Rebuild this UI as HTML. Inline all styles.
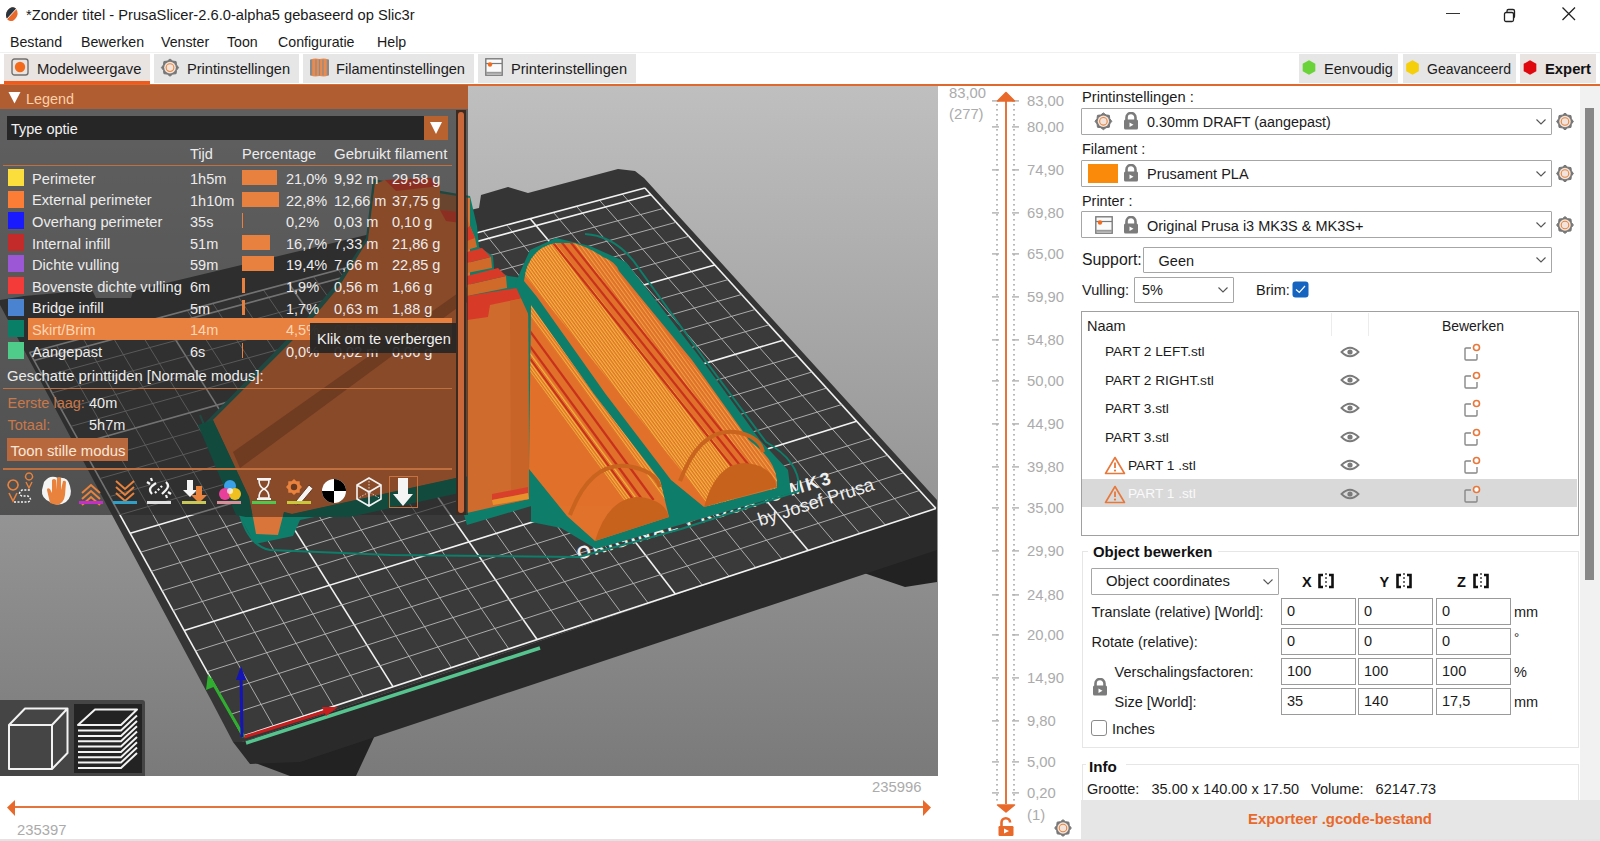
<!DOCTYPE html><html><head><meta charset="utf-8"><style>
html,body{margin:0;padding:0;width:1600px;height:841px;overflow:hidden;background:#fff}
body{position:relative;font-family:"Liberation Sans",sans-serif}
.t{position:absolute;white-space:nowrap;line-height:1;font-family:"Liberation Sans",sans-serif}
</style></head><body>
<div style="position:absolute;left:0px;top:0px;width:1600px;height:54px;background:#fff"></div>
<svg style="position:absolute;left:0;top:0" width="26" height="28" viewBox="0 0 26 28">
<clipPath id="tc"><ellipse cx="11.8" cy="14.2" rx="5.6" ry="7" transform="rotate(20 11.8 14.2)"/></clipPath>
<g clip-path="url(#tc)"><rect x="0" y="0" width="26" height="28" fill="#ea6a2c"/><polygon points="0,0 26,0 18.5,6.5 6,20 0,22" fill="#263540"/><path d="M18.5 6.5 L6 20" stroke="#fff" stroke-width="0.9"/></g></svg>
<div class="t" style="left:26.0px;top:7.6px;font-size:14.7px;color:#1a1a1a;font-weight:normal;">*Zonder titel - PrusaSlicer-2.6.0-alpha5 gebaseerd op Slic3r</div>
<div style="position:absolute;left:1446px;top:13px;width:14px;height:1px;background:#333"></div>
<svg style="position:absolute;left:1500px;top:6px" width="18" height="18" viewBox="0 0 18 18"><rect x="4.5" y="6.5" width="9" height="9" rx="1.5" fill="none" stroke="#222" stroke-width="1.3"/><path d="M7 6.5 V5 a1.5 1.5 0 0 1 1.5 -1.5 H13 a1.5 1.5 0 0 1 1.5 1.5 V10.5 a1.5 1.5 0 0 1 -1.5 1.5 H13.5" fill="none" stroke="#222" stroke-width="1.3"/></svg>
<svg style="position:absolute;left:1561px;top:6px" width="16" height="16" viewBox="0 0 16 16"><path d="M1.5 1.5 L14 14 M14 1.5 L1.5 14" stroke="#222" stroke-width="1.3"/></svg>
<div class="t" style="left:10.0px;top:34.8px;font-size:14.2px;color:#1a1a1a;font-weight:normal;">Bestand</div>
<div class="t" style="left:81.0px;top:34.8px;font-size:14.2px;color:#1a1a1a;font-weight:normal;">Bewerken</div>
<div class="t" style="left:161.0px;top:34.8px;font-size:14.2px;color:#1a1a1a;font-weight:normal;">Venster</div>
<div class="t" style="left:227.0px;top:34.8px;font-size:14.2px;color:#1a1a1a;font-weight:normal;">Toon</div>
<div class="t" style="left:278.0px;top:34.8px;font-size:14.2px;color:#1a1a1a;font-weight:normal;">Configuratie</div>
<div class="t" style="left:377.0px;top:34.8px;font-size:14.2px;color:#1a1a1a;font-weight:normal;">Help</div>
<div style="position:absolute;left:0px;top:52px;width:1600px;height:1px;background:#f0f0f0"></div>
<div style="position:absolute;left:4px;top:54px;width:146px;height:29px;background:#e9e4e2"></div>
<div style="position:absolute;left:154px;top:54px;width:145px;height:29px;background:#e6e6e6"></div>
<div style="position:absolute;left:303px;top:54px;width:171px;height:29px;background:#e6e6e6"></div>
<div style="position:absolute;left:478px;top:54px;width:158px;height:29px;background:#e6e6e6"></div>
<div style="position:absolute;left:1299px;top:54px;width:99px;height:29px;background:#e6e6e6"></div>
<div style="position:absolute;left:1403px;top:54px;width:113px;height:29px;background:#e6e6e6"></div>
<div style="position:absolute;left:1520px;top:54px;width:76px;height:29px;background:#e9e3e2"></div>
<div style="position:absolute;left:4px;top:81px;width:146px;height:4px;background:#f05a1a"></div>
<div style="position:absolute;left:0px;top:84px;width:1600px;height:2px;background:#e0692e"></div>
<svg style="position:absolute;left:11px;top:58px" width="18" height="18" viewBox="0 0 18 18"><rect x="1" y="1" width="16" height="16" rx="2.5" fill="none" stroke="#707070" stroke-width="1.4"/><circle cx="9" cy="9" r="5.2" fill="#f26b1d"/></svg>
<svg style="position:absolute;left:0;top:0;overflow:visible" width="1" height="1"><polygon points="178.60,67.60 176.52,70.30 176.08,73.68 172.70,74.12 170.00,76.20 167.30,74.12 163.92,73.68 163.48,70.30 161.40,67.60 163.48,64.90 163.92,61.52 167.30,61.08 170.00,59.00 172.70,61.08 176.08,61.52 176.52,64.90" fill="#777" stroke="#777" stroke-width="1" stroke-linejoin="round"/><circle cx="170" cy="67.6" r="5.85" fill="#f2e4dc"/><circle cx="170" cy="67.6" r="3.87" fill="none" stroke="#e8873e" stroke-width="1.1"/></svg>
<svg style="position:absolute;left:310px;top:58px" width="19" height="19" viewBox="0 0 19 19"><path d="M1 1.5 Q4 0 9.5 1 Q15 0 18 1.5 V17.5 Q15 19 9.5 18 Q4 19 1 17.5 Z" fill="#e98a4e"/><path d="M1 1.5 V17.5 M18 1.5 V17.5" stroke="#8a8a8a" stroke-width="2.4"/><path d="M6 1.5 V17.5 M9.5 1.5 V17.5 M13 1.5 V17.5" stroke="#8a8a8a" stroke-width="1.2"/></svg>
<svg style="position:absolute;left:485px;top:58px" width="18" height="18" viewBox="0 0 18 18"><rect x="0.8" y="0.8" width="16.4" height="16.4" fill="#fafafa" stroke="#7a7a7a" stroke-width="1.4"/><path d="M1 5.5 H17" stroke="#7a7a7a" stroke-width="1.2"/><path d="M1 14.8 H17" stroke="#9a9a9a" stroke-width="2"/><circle cx="5" cy="6.5" r="2.2" fill="#f26b1d"/></svg>
<div class="t" style="left:37.0px;top:61.5px;font-size:14.8px;color:#1b1b1b;font-weight:normal;">Modelweergave</div>
<div class="t" style="left:187.0px;top:61.6px;font-size:14.6px;color:#1b1b1b;font-weight:normal;">Printinstellingen</div>
<div class="t" style="left:336.0px;top:61.6px;font-size:14.6px;color:#1b1b1b;font-weight:normal;">Filamentinstellingen</div>
<div class="t" style="left:511.0px;top:61.6px;font-size:14.6px;color:#1b1b1b;font-weight:normal;">Printerinstellingen</div>
<svg style="position:absolute;left:0;top:0;overflow:visible" width="1" height="1"><polygon points="1315.32,71.15 1309.00,74.80 1302.68,71.15 1302.68,63.85 1309.00,60.20 1315.32,63.85" fill="#6ad33a"/><polygon points="1418.82,71.15 1412.50,74.80 1406.18,71.15 1406.18,63.85 1412.50,60.20 1418.82,63.85" fill="#f5cf0a"/><polygon points="1536.32,71.15 1530.00,74.80 1523.68,71.15 1523.68,63.85 1530.00,60.20 1536.32,63.85" fill="#e0080f"/></svg>
<div class="t" style="left:1324.0px;top:61.6px;font-size:14.6px;color:#1b1b1b;font-weight:normal;">Eenvoudig</div>
<div class="t" style="left:1427.0px;top:62.1px;font-size:14.0px;color:#1b1b1b;font-weight:normal;">Geavanceerd</div>
<div class="t" style="left:1545.0px;top:61.5px;font-size:14.8px;color:#111;font-weight:bold;">Expert</div>
<svg style="position:absolute;left:0;top:86px" width="938" height="690" viewBox="0 86 938 690">
<defs><linearGradient id="bg" x1="0" y1="0" x2="0" y2="1"><stop offset="0" stop-color="#bfbfbf"/><stop offset="1" stop-color="#7a7a7a"/></linearGradient><pattern id="ys" patternUnits="userSpaceOnUse" width="2.6" height="10" patternTransform="rotate(-36.2)"><rect x="0" y="0" width="1.2" height="10" fill="#f6c040"/></pattern><pattern id="ys2" patternUnits="userSpaceOnUse" width="3.2" height="10" patternTransform="rotate(-36.2)"><rect x="0" y="0" width="1" height="10" fill="#f2b048"/></pattern></defs>
<rect x="0" y="86" width="938" height="690" fill="url(#bg)"/>
<polygon points="247.0,760.0 376.0,733.0 356.0,776.0 290.0,776.0" fill="#222"/>
<polygon points="840.0,560.0 937.0,545.0 937.0,582.0 905.0,587.0 861.0,572.0" fill="#222"/>
<polygon points="233.0,742.0 242.0,742.0 937.0,506.0 937.0,550.0 300.0,762.0 250.0,764.0" fill="#2a2a2a"/>
<polygon points="242.0,742.0 937.0,506.0 937.0,500.0 644.0,178.0 635.0,171.0 618.0,169.0 528.0,193.0 508.0,187.0 481.0,195.0 479.0,208.0 466.0,211.0 133.0,291.0 131.0,298.0 96.0,298.0 92.0,290.0 24.0,296.0 0.0,300.0 0.0,305.0 104.0,500.0 211.0,700.0 233.0,742.0" fill="#353535"/>
<polygon points="242.9,736.1 935.9,508.5 644.9,188.0 29.6,352.4" fill="#3a3a3a"/>
<line x1="242.9" y1="736.1" x2="29.6" y2="352.4" stroke="#f2f2f2" stroke-width="1.6"/><line x1="273.4" y1="726.1" x2="56.4" y2="345.2" stroke="#b8b8b8" stroke-width="0.9"/><line x1="303.7" y1="716.2" x2="82.9" y2="338.1" stroke="#b8b8b8" stroke-width="0.9"/><line x1="333.7" y1="706.3" x2="109.3" y2="331.1" stroke="#b8b8b8" stroke-width="0.9"/><line x1="363.5" y1="696.5" x2="135.4" y2="324.1" stroke="#b8b8b8" stroke-width="0.9"/><line x1="393.1" y1="686.8" x2="161.4" y2="317.1" stroke="#f2f2f2" stroke-width="1.6"/><line x1="422.3" y1="677.2" x2="187.2" y2="310.3" stroke="#b8b8b8" stroke-width="0.9"/><line x1="451.4" y1="667.6" x2="212.8" y2="303.4" stroke="#b8b8b8" stroke-width="0.9"/><line x1="480.2" y1="658.2" x2="238.3" y2="296.6" stroke="#b8b8b8" stroke-width="0.9"/><line x1="508.8" y1="648.8" x2="263.5" y2="289.9" stroke="#b8b8b8" stroke-width="0.9"/><line x1="537.1" y1="639.5" x2="288.6" y2="283.2" stroke="#f2f2f2" stroke-width="1.6"/><line x1="565.2" y1="630.3" x2="313.5" y2="276.5" stroke="#b8b8b8" stroke-width="0.9"/><line x1="593.1" y1="621.1" x2="338.3" y2="269.9" stroke="#b8b8b8" stroke-width="0.9"/><line x1="620.7" y1="612.0" x2="362.8" y2="263.3" stroke="#b8b8b8" stroke-width="0.9"/><line x1="648.1" y1="603.0" x2="387.2" y2="256.8" stroke="#b8b8b8" stroke-width="0.9"/><line x1="675.3" y1="594.1" x2="411.5" y2="250.3" stroke="#f2f2f2" stroke-width="1.6"/><line x1="702.3" y1="585.2" x2="435.5" y2="243.9" stroke="#b8b8b8" stroke-width="0.9"/><line x1="729.1" y1="576.4" x2="459.4" y2="237.5" stroke="#b8b8b8" stroke-width="0.9"/><line x1="755.7" y1="567.7" x2="483.2" y2="231.2" stroke="#b8b8b8" stroke-width="0.9"/><line x1="782.0" y1="559.0" x2="506.7" y2="224.9" stroke="#b8b8b8" stroke-width="0.9"/><line x1="808.2" y1="550.5" x2="530.1" y2="218.6" stroke="#f2f2f2" stroke-width="1.6"/><line x1="834.1" y1="541.9" x2="553.4" y2="212.4" stroke="#b8b8b8" stroke-width="0.9"/><line x1="859.8" y1="533.5" x2="576.5" y2="206.3" stroke="#b8b8b8" stroke-width="0.9"/><line x1="885.4" y1="525.1" x2="599.4" y2="200.1" stroke="#b8b8b8" stroke-width="0.9"/><line x1="910.7" y1="516.8" x2="622.2" y2="194.0" stroke="#b8b8b8" stroke-width="0.9"/><line x1="935.9" y1="508.5" x2="644.9" y2="188.0" stroke="#f2f2f2" stroke-width="1.6"/><line x1="242.9" y1="736.1" x2="935.9" y2="508.5" stroke="#f2f2f2" stroke-width="1.6"/><line x1="230.7" y1="714.3" x2="919.5" y2="490.5" stroke="#b8b8b8" stroke-width="0.9"/><line x1="218.8" y1="692.8" x2="903.4" y2="472.8" stroke="#b8b8b8" stroke-width="0.9"/><line x1="207.1" y1="671.7" x2="887.6" y2="455.3" stroke="#b8b8b8" stroke-width="0.9"/><line x1="195.5" y1="651.0" x2="872.0" y2="438.2" stroke="#b8b8b8" stroke-width="0.9"/><line x1="184.2" y1="630.5" x2="856.6" y2="421.2" stroke="#f2f2f2" stroke-width="1.6"/><line x1="173.0" y1="610.5" x2="841.5" y2="404.6" stroke="#b8b8b8" stroke-width="0.9"/><line x1="162.1" y1="590.7" x2="826.6" y2="388.1" stroke="#b8b8b8" stroke-width="0.9"/><line x1="151.3" y1="571.3" x2="811.9" y2="372.0" stroke="#b8b8b8" stroke-width="0.9"/><line x1="140.6" y1="552.2" x2="797.4" y2="356.0" stroke="#b8b8b8" stroke-width="0.9"/><line x1="130.2" y1="533.3" x2="783.1" y2="340.3" stroke="#f2f2f2" stroke-width="1.6"/><line x1="119.9" y1="514.8" x2="769.1" y2="324.8" stroke="#b8b8b8" stroke-width="0.9"/><line x1="109.7" y1="496.6" x2="755.2" y2="309.5" stroke="#b8b8b8" stroke-width="0.9"/><line x1="99.8" y1="478.6" x2="741.5" y2="294.5" stroke="#b8b8b8" stroke-width="0.9"/><line x1="89.9" y1="460.9" x2="728.1" y2="279.6" stroke="#b8b8b8" stroke-width="0.9"/><line x1="80.3" y1="443.5" x2="714.8" y2="265.0" stroke="#f2f2f2" stroke-width="1.6"/><line x1="70.7" y1="426.4" x2="701.7" y2="250.5" stroke="#b8b8b8" stroke-width="0.9"/><line x1="61.4" y1="409.5" x2="688.7" y2="236.3" stroke="#b8b8b8" stroke-width="0.9"/><line x1="52.1" y1="392.9" x2="676.0" y2="222.3" stroke="#b8b8b8" stroke-width="0.9"/><line x1="43.0" y1="376.5" x2="663.4" y2="208.4" stroke="#b8b8b8" stroke-width="0.9"/><line x1="34.0" y1="360.4" x2="651.0" y2="194.8" stroke="#f2f2f2" stroke-width="1.6"/><line x1="29.6" y1="352.4" x2="644.9" y2="188.0" stroke="#f2f2f2" stroke-width="1.6"/>
<text x="0" y="0" transform="translate(579 560) rotate(-16.8)" font-family="Liberation Sans" font-weight="bold" font-size="18" fill="#f0f0f0" letter-spacing="2.3">ORIGINAL PRUSA i3 MK3</text>
<text x="0" y="0" transform="translate(760 526) rotate(-17.5)" font-family="Liberation Sans" font-weight="normal" font-size="18.3" fill="#f0f0f0">by Josef Prusa</text>
<path d="M200 415 L238 506 Q246 545 270 550 L390 555 L579 557 L681 529 L799 491 Q801 462 766 442 L705 360 L640 270 Q618 236 585 234" fill="none" stroke="#0e7d6a" stroke-width="2"/>
<path d="M246 743 L540 648" stroke="#56c48e" stroke-width="3.5"/>
<polygon points="204,424 236,510 255,544 293,536 300,520 456,488 467,525 545,502 536,300 523,278 508,276 494,269 493,256 479,247 477,226 470,196 373,179 366,238 336,284 300,326" fill="#0e7d6a"/>
<polygon points="213,420 249,497 252,512 256,534 278,535 284,512 292,514 456,478 470,476 470,198 375,183 368,240 339,287 303,330" fill="#d9743a"/>
<polygon points="233,452 240,470 470,300 470,285" fill="#a65526"/>
<polygon points="460,200 470,226 475,238 477,247 467,250 460,250" fill="#d06a2a"/>
<polygon points="467,228 470,226 475,238 467,241" fill="#d83a28"/>
<polygon points="467,263 491,257 492,268 467,273" fill="#d06a2a"/>
<polygon points="467,252 482,248 491,257 467,263" fill="#d83a28"/>
<polygon points="467,285 506,276 507,288 467,296" fill="#d06a2a"/>
<polygon points="467,276 498,268 506,276 467,285" fill="#d83a28"/>
<polygon points="467,305 528,297 529,499 467,513" fill="#cf6b2d"/>
<polygon points="467,296 517,288 528,297 490,305 488,317 467,320" fill="#d83a28"/>
<polygon points="510,301 528,297 529,499 511,503" fill="#c86428"/>
<polygon points="492,494 528,487 528,493 492,500" fill="#d8402c"/><polygon points="492,500 528,493 529,499 493,505" fill="#e8902c"/>
<path d="M515 285 L521 270 L530 250 L556 238 L590 246 L626 262 L702 360 L760 440 L788 470 L791 493 L683 524 L596 549 L561 528 L531 522 L531 320 Z" fill="#0e7d6a"/>
<clipPath id="cb"><path d="M531 305 L594 394 L660 480 L669 517 L595 541 L567 516 L529 469 Z"/></clipPath>
<clipPath id="ca"><path d="M524 281 Q528 248 556 243 L574 243 Q590 248 603 257 Q616 262 619 271 L692 360 L749 440 L763 452 Q775 465 777 480 L777 488 L704 507 L671 480 L605.6 394 L537 297 Z"/></clipPath>
<path d="M531 305 L594 394 L660 480 L669 517 L595 541 L567 516 L529 469 Z" fill="#e0722c"/>
<g clip-path="url(#cb)"><path d="M485.2 300 L631.6 500" stroke="url(#ys)" stroke-width="12" opacity="0.9"/><path d="M529.2 300 L675.6 500" stroke="url(#ys)" stroke-width="18" opacity="0.8"/><path d="M487.2 300 L633.6 500" stroke="#c8321c" stroke-width="2.2"/><path d="M496.2 300 L642.6 500" stroke="#c8321c" stroke-width="2.2"/><path d="M507.2 300 L653.6 500" stroke="#c8321c" stroke-width="2.2"/></g>
<path d="M524 281 Q528 248 556 243 L574 243 Q590 248 603 257 Q616 262 619 271 L692 360 L749 440 L763 452 Q775 465 777 480 L777 488 L704 507 L671 480 L605.6 394 L537 297 Z" fill="#e0722c"/>
<g clip-path="url(#ca)"><path d="M516.8 230 L732.8 500" stroke="url(#ys)" stroke-width="44" opacity="0.9"/><path d="M572.8 230 L788.8 500" stroke="url(#ys2)" stroke-width="18" opacity="0.8"/><path d="M546.8 235 L733.2 468" stroke="#c8321c" stroke-width="2.2"/><path d="M555.8 235 L742.2 468" stroke="#c8321c" stroke-width="2.2"/><path d="M564.8 235 L751.2 468" stroke="#c8321c" stroke-width="2.2"/></g>
<path d="M570 515 Q590 462 627 466 Q655 470 660 487" fill="none" stroke="#c8641e" stroke-width="4"/>
<path d="M595 541 Q608 497 640 497 Q665 500 669 517 Z" fill="#c7621d"/>
<path d="M680 481 Q700 428 735 432 Q760 436 763 452" fill="none" stroke="#c8641e" stroke-width="4"/>
<path d="M704 507 Q716 463 745 463 Q772 465 777 487 Z" fill="#c7621d"/>
<path d="M244 737 L333 709" stroke="#c81e1e" stroke-width="3"/><polygon points="338,707 322,707 326,716" fill="#c81e1e"/>
<path d="M244 737 L210 678" stroke="#2fae2f" stroke-width="3"/><polygon points="208,674 206,690 216,686" fill="#2fae2f"/>
<path d="M242 737 L241 672" stroke="#1515b5" stroke-width="3"/><polygon points="241,666 236,680 246,680" fill="#1515b5"/>
</svg>
<div style="position:absolute;left:0;top:86px;width:468px;height:429px;background:rgba(42,42,42,0.64)"></div>
<svg style="position:absolute;left:0;top:109px" width="456" height="408" viewBox="0 109 456 408"><polygon points="213,420 303,330 339,287 368,240 375,184 385,180 431,178 440,186 440,210 468,214 468,476 456,478 292,514 284,512 278,535 256,534 249,497" fill="#884a29"/><polygon points="198,425 213,420 249,497 256,534 278,535 284,512 292,514 456,478 468,476 468,491 300,528 236,515" fill="#134a3e"/><polygon points="385,180 431,178 440,186 396,191" fill="#8c2f22"/><polygon points="440,210 468,213 468,224 446,221" fill="#8c2f22"/><polygon points="233,452 240,468 468,300 468,286" fill="#703c21"/></svg>
<div style="position:absolute;left:0;top:85px;width:468px;height:24px;background:#b15d32"></div>
<svg style="position:absolute;left:0;top:0;overflow:visible" width="1" height="1"><polygon points="8.5,92 20.5,92 14.5,103.5" fill="#fff"/></svg>
<div class="t" style="left:26.0px;top:91.8px;font-size:14.4px;color:#fdd0a6;font-weight:normal;">Legend</div>
<div style="position:absolute;left:7px;top:116px;width:417px;height:24px;background:#262626"></div>
<div style="position:absolute;left:424px;top:116px;width:24px;height:24px;background:#b8622f"></div>
<svg style="position:absolute;left:0;top:0;overflow:visible" width="1" height="1"><polygon points="430,122 442,122 436,134" fill="#fff"/></svg>
<div class="t" style="left:11.0px;top:121.7px;font-size:14.5px;color:#f2f2f2;font-weight:normal;">Type optie</div>
<div class="t" style="left:190.0px;top:146.7px;font-size:14.5px;color:#ececec;font-weight:normal;">Tijd</div>
<div class="t" style="left:242.0px;top:146.7px;font-size:14.5px;color:#ececec;font-weight:normal;">Percentage</div>
<div class="t" style="left:334.0px;top:146.3px;font-size:15.0px;color:#ececec;font-weight:normal;">Gebruikt filament</div>
<div style="position:absolute;left:3px;top:164.6px;width:449px;height:1.2px;background:#c0703e"></div>
<div style="position:absolute;left:8px;top:169.0px;width:16px;height:17px;background:#fbdd3b"></div>
<div class="t" style="left:32.0px;top:171.8px;font-size:14.66px;color:#ececec;font-weight:normal;">Perimeter</div>
<div class="t" style="left:190.0px;top:171.9px;font-size:14.5px;color:#ececec;font-weight:normal;">1h5m</div>
<div style="position:absolute;left:242px;top:170.0px;width:35px;height:15px;background:#e8803f"></div>
<div class="t" style="left:286.0px;top:171.9px;font-size:14.5px;color:#ececec;font-weight:normal;">21,0%</div>
<div class="t" style="left:334.0px;top:171.9px;font-size:14.5px;color:#ececec;font-weight:normal;">9,92 m</div>
<div class="t" style="left:392.0px;top:171.9px;font-size:14.5px;color:#ececec;font-weight:normal;">29,58 g</div>
<div style="position:absolute;left:8px;top:190.6px;width:16px;height:17px;background:#fc7d36"></div>
<div class="t" style="left:32.0px;top:193.4px;font-size:14.66px;color:#ececec;font-weight:normal;">External perimeter</div>
<div class="t" style="left:190.0px;top:193.5px;font-size:14.5px;color:#ececec;font-weight:normal;">1h10m</div>
<div style="position:absolute;left:242px;top:191.6px;width:37px;height:15px;background:#e8803f"></div>
<div class="t" style="left:286.0px;top:193.5px;font-size:14.5px;color:#ececec;font-weight:normal;">22,8%</div>
<div class="t" style="left:334.0px;top:193.5px;font-size:14.5px;color:#ececec;font-weight:normal;">12,66 m</div>
<div class="t" style="left:392.0px;top:193.5px;font-size:14.5px;color:#ececec;font-weight:normal;">37,75 g</div>
<div style="position:absolute;left:8px;top:212.2px;width:16px;height:17px;background:#1a1aff"></div>
<div class="t" style="left:32.0px;top:215.0px;font-size:14.66px;color:#ececec;font-weight:normal;">Overhang perimeter</div>
<div class="t" style="left:190.0px;top:215.1px;font-size:14.5px;color:#ececec;font-weight:normal;">35s</div>
<div style="position:absolute;left:242px;top:213.2px;width:1px;height:15px;background:#e8803f"></div>
<div class="t" style="left:286.0px;top:215.1px;font-size:14.5px;color:#ececec;font-weight:normal;">0,2%</div>
<div class="t" style="left:334.0px;top:215.1px;font-size:14.5px;color:#ececec;font-weight:normal;">0,03 m</div>
<div class="t" style="left:392.0px;top:215.1px;font-size:14.5px;color:#ececec;font-weight:normal;">0,10 g</div>
<div style="position:absolute;left:8px;top:233.8px;width:16px;height:17px;background:#c32b2b"></div>
<div class="t" style="left:32.0px;top:236.6px;font-size:14.66px;color:#ececec;font-weight:normal;">Internal infill</div>
<div class="t" style="left:190.0px;top:236.7px;font-size:14.5px;color:#ececec;font-weight:normal;">51m</div>
<div style="position:absolute;left:242px;top:234.8px;width:28px;height:15px;background:#e8803f"></div>
<div class="t" style="left:286.0px;top:236.7px;font-size:14.5px;color:#ececec;font-weight:normal;">16,7%</div>
<div class="t" style="left:334.0px;top:236.7px;font-size:14.5px;color:#ececec;font-weight:normal;">7,33 m</div>
<div class="t" style="left:392.0px;top:236.7px;font-size:14.5px;color:#ececec;font-weight:normal;">21,86 g</div>
<div style="position:absolute;left:8px;top:255.4px;width:16px;height:17px;background:#9b57d6"></div>
<div class="t" style="left:32.0px;top:258.2px;font-size:14.66px;color:#ececec;font-weight:normal;">Dichte vulling</div>
<div class="t" style="left:190.0px;top:258.3px;font-size:14.5px;color:#ececec;font-weight:normal;">59m</div>
<div style="position:absolute;left:242px;top:256.4px;width:32px;height:15px;background:#e8803f"></div>
<div class="t" style="left:286.0px;top:258.3px;font-size:14.5px;color:#ececec;font-weight:normal;">19,4%</div>
<div class="t" style="left:334.0px;top:258.3px;font-size:14.5px;color:#ececec;font-weight:normal;">7,66 m</div>
<div class="t" style="left:392.0px;top:258.3px;font-size:14.5px;color:#ececec;font-weight:normal;">22,85 g</div>
<div style="position:absolute;left:8px;top:277.0px;width:16px;height:17px;background:#f53a3a"></div>
<div class="t" style="left:32.0px;top:279.8px;font-size:14.66px;color:#ececec;font-weight:normal;">Bovenste dichte vulling</div>
<div class="t" style="left:190.0px;top:279.9px;font-size:14.5px;color:#ececec;font-weight:normal;">6m</div>
<div style="position:absolute;left:242px;top:278.0px;width:3px;height:15px;background:#e8803f"></div>
<div class="t" style="left:286.0px;top:279.9px;font-size:14.5px;color:#ececec;font-weight:normal;">1,9%</div>
<div class="t" style="left:334.0px;top:279.9px;font-size:14.5px;color:#ececec;font-weight:normal;">0,56 m</div>
<div class="t" style="left:392.0px;top:279.9px;font-size:14.5px;color:#ececec;font-weight:normal;">1,66 g</div>
<div style="position:absolute;left:8px;top:298.6px;width:16px;height:17px;background:#4a84d1"></div>
<div class="t" style="left:32.0px;top:301.4px;font-size:14.66px;color:#ececec;font-weight:normal;">Bridge infill</div>
<div class="t" style="left:190.0px;top:301.5px;font-size:14.5px;color:#ececec;font-weight:normal;">5m</div>
<div style="position:absolute;left:242px;top:299.6px;width:3px;height:15px;background:#e8803f"></div>
<div class="t" style="left:286.0px;top:301.5px;font-size:14.5px;color:#ececec;font-weight:normal;">1,7%</div>
<div class="t" style="left:334.0px;top:301.5px;font-size:14.5px;color:#ececec;font-weight:normal;">0,63 m</div>
<div class="t" style="left:392.0px;top:301.5px;font-size:14.5px;color:#ececec;font-weight:normal;">1,88 g</div>
<div style="position:absolute;left:8px;top:320.2px;width:16px;height:17px;background:#0a7f67"></div>
<div style="position:absolute;left:28px;top:318px;width:424px;height:21.5px;background:#e8803f"></div>
<div class="t" style="left:32.0px;top:323.0px;font-size:14.66px;color:#fcd6b4;font-weight:normal;">Skirt/Brim</div>
<div class="t" style="left:190.0px;top:323.1px;font-size:14.5px;color:#fcd6b4;font-weight:normal;">14m</div>
<div class="t" style="left:286.0px;top:323.1px;font-size:14.5px;color:#fcd6b4;font-weight:normal;">4,5%</div>
<div class="t" style="left:334.0px;top:323.1px;font-size:14.5px;color:#f7b58a;font-weight:normal;">0,55 m</div>
<div class="t" style="left:392.0px;top:323.1px;font-size:14.5px;color:#f7b58a;font-weight:normal;">1,64 g</div>
<div style="position:absolute;left:8px;top:341.8px;width:16px;height:17px;background:#4fcb8a"></div>
<div class="t" style="left:32.0px;top:344.6px;font-size:14.66px;color:#ececec;font-weight:normal;">Aangepast</div>
<div class="t" style="left:190.0px;top:344.7px;font-size:14.5px;color:#ececec;font-weight:normal;">6s</div>
<div style="position:absolute;left:242px;top:342.8px;width:1px;height:15px;background:#e8803f"></div>
<div class="t" style="left:286.0px;top:344.7px;font-size:14.5px;color:#ececec;font-weight:normal;">0,0%</div>
<div class="t" style="left:334.0px;top:344.7px;font-size:14.5px;color:#ececec;font-weight:normal;">0,02 m</div>
<div class="t" style="left:392.0px;top:344.7px;font-size:14.5px;color:#ececec;font-weight:normal;">0,06 g</div>
<div style="position:absolute;left:310px;top:322.5px;width:147px;height:30.5px;background:rgba(38,38,38,0.93)"></div>
<div class="t" style="left:317.0px;top:331.6px;font-size:14.6px;color:#f0f0f0;font-weight:normal;">Klik om te verbergen</div>
<div class="t" style="left:7.0px;top:369.3px;font-size:14.8px;color:#ececec;font-weight:normal;">Geschatte printtijden [Normale modus]:</div>
<div style="position:absolute;left:3px;top:388.2px;width:449px;height:1.2px;background:#c0703e"></div>
<div class="t" style="left:7.5px;top:395.9px;font-size:14.5px;color:#c9784a;font-weight:normal;">Eerste laag:</div>
<div class="t" style="left:89.0px;top:395.9px;font-size:14.5px;color:#ececec;font-weight:normal;">40m</div>
<div class="t" style="left:7.5px;top:418.3px;font-size:14.5px;color:#c9784a;font-weight:normal;">Totaal:</div>
<div class="t" style="left:89.0px;top:418.3px;font-size:14.5px;color:#ececec;font-weight:normal;">5h7m</div>
<div style="position:absolute;left:7px;top:438px;width:121px;height:23px;background:#b8683d"></div>
<div class="t" style="left:10.5px;top:443.9px;font-size:14.9px;color:#fbe6d6;font-weight:normal;">Toon stille modus</div>
<div style="position:absolute;left:3px;top:468.4px;width:449px;height:1.2px;background:#c0703e"></div>
<div style="position:absolute;left:456px;top:110px;width:10px;height:405px;background:#3a2a20"></div>
<div style="position:absolute;left:458px;top:112px;width:6px;height:401px;background:#c8673a;border-radius:3px"></div>
<svg style="position:absolute;left:0;top:0;overflow:visible" width="1" height="1"><path d="M13 490 a5 5 0 1 1 0.1 0 Z" fill="none" stroke="#e8823c" stroke-width="1.6"/><path d="M9 493 L13 501 L17 493" fill="none" stroke="#e8823c" stroke-width="1.6"/><path d="M29 480 a3.5 3.5 0 1 1 0.1 0 Z" fill="none" stroke="#e8823c" stroke-width="1.4"/><path d="M26 482 L29 488 L32 482" fill="none" stroke="#e8823c" stroke-width="1.4"/><path d="M14 502 H28 Q33 500 28 496 H22 Q17 494 22 490 H30" fill="none" stroke="#f4f4f4" stroke-width="1.5" stroke-dasharray="2 1.5"/><path d="M44 482 Q50 474 58 478 Q68 476 70 486 Q73 496 66 502 Q58 507 50 502 Q41 498 42 490 Z" fill="#f4f4f4"/><path d="M50 503 L47 490 Q47 487 50 489 L52 493 L52 480 Q54 478 56 480 L56 490 L57 478 Q59 476 61 478 L61 490 L63 481 Q65 480 66 482 L65 495 Q64 503 57 505 Z" fill="#e8823c"/><path d="M82 493 L91 485 L100 493" fill="none" stroke="#e8823c" stroke-width="2"/><path d="M82 499 L91 491 L100 499" fill="none" stroke="#e8823c" stroke-width="2"/><path d="M82 505 L91 497 L100 505" fill="none" stroke="#e8823c" stroke-width="2"/><rect x="79" y="501" width="24" height="3" fill="#c62fc6"/><path d="M116 481 L125 489 L134 481" fill="none" stroke="#e8823c" stroke-width="2"/><path d="M116 487 L125 495 L134 487" fill="none" stroke="#e8823c" stroke-width="2"/><path d="M116 493 L125 501 L134 493" fill="none" stroke="#e8823c" stroke-width="2"/><rect x="113" y="501" width="24" height="3" fill="#2fa0c8"/><path d="M152 494 Q148 490 152 486 L156 483 M166 482 Q170 486 166 490 L162 494 M150 484 L147 482 M152 481 L151 478 M168 492 L171 494 M166 495 L167 498" fill="none" stroke="#f4f4f4" stroke-width="2.2"/><path d="M155 493 L163 485" stroke="#f4f4f4" stroke-width="2.2" stroke-dasharray="2 2"/><rect x="147" y="501" width="24" height="3" fill="#e0e0e0"/><path d="M187 480 V490 H183 L190 497 L197 490 H193 V480 Z" fill="#f4f4f4"/><path d="M196 486 V495 H191 L199 503 L207 495 H202 V486 Z" fill="#e8823c"/><rect x="182" y="501" width="24" height="3" fill="#c8c85a"/><circle cx="230" cy="486" r="6" fill="#3aa0e8"/><circle cx="225" cy="494" r="6" fill="#e8409a"/><circle cx="235" cy="494" r="6" fill="#f0c020"/><circle cx="230" cy="491" r="3" fill="#fff" opacity="0.7"/><rect x="217" y="501" width="24" height="3" fill="#d8909a"/><path d="M257 479 H271 M257 499 H271" stroke="#f4f4f4" stroke-width="2"/><path d="M259 480 Q259 487 264 489 Q269 487 269 480 Z M259 498 Q259 491 264 489 Q269 491 269 498 Z" fill="none" stroke="#f4f4f4" stroke-width="1.6"/><rect x="252" y="501" width="24" height="3" fill="#50c850"/><polygon points="302.0,487.0 299.8,489.4 299.7,492.7 296.4,492.8 294.0,495.0 291.6,492.8 288.3,492.7 288.2,489.4 286.0,487.0 288.2,484.6 288.3,481.3 291.6,481.2 294.0,479.0 296.4,481.2 299.7,481.3 299.8,484.6" fill="#e8823c"/><circle cx="294" cy="487" r="3.2" fill="#6a3a20"/><path d="M296 501 L309 485 L313 488.5 L300 504 L295 505 Z" fill="#f4f4f4" stroke="#6a3a20" stroke-width="1"/><rect x="287" y="501" width="24" height="3" fill="#c8c83a"/><circle cx="334" cy="491" r="12" fill="#fff"/><path d="M334 491 V479 A12 12 0 0 1 346 491 Z M334 491 V503 A12 12 0 0 1 322 491 Z" fill="#000"/><path d="M369 478 L381 485 V499 L369 506 L357 499 V485 Z M357 485 L369 492 L381 485 M369 492 V506" fill="none" stroke="#f4f4f4" stroke-width="1.6"/><path d="M369 478 V492 M357 499 L369 492 L381 499" fill="none" stroke="#f4f4f4" stroke-width="0.8" stroke-dasharray="1.5 1.5"/><rect x="389.5" y="476.5" width="28" height="31" fill="none" stroke="#c8703e" stroke-width="1"/><path d="M398 478 V494 H393 L403 506 L413 494 H408 V478 Z" fill="#f4f4f4"/></svg>
<div style="position:absolute;left:0px;top:700px;width:145px;height:76px;background:#454545;border-top-right-radius:3px"></div>
<div style="position:absolute;left:74px;top:704px;width:68px;height:69px;background:#232323"></div>
<svg style="position:absolute;left:0;top:0;overflow:visible" width="1" height="1">
<path d="M9 725 L25 708.5 H67.5 V753 L52 769 H9 Z M9 725 H52 L67.5 708.5 M52 725 V769" fill="none" stroke="#f2f2f2" stroke-width="2" stroke-linejoin="round"/>
<path d="M78 725 L95 709.5 H137 L121 725 Z" fill="none" stroke="#f2f2f2" stroke-width="2" stroke-linejoin="round"/>
<path d="M78 730.5 H121 L137 715.5" fill="none" stroke="#f2f2f2" stroke-width="2"/><path d="M78 735.9 H121 L137 720.9" fill="none" stroke="#f2f2f2" stroke-width="2"/><path d="M78 741.2 H121 L137 726.2" fill="none" stroke="#f2f2f2" stroke-width="2"/><path d="M78 746.5 H121 L137 731.5" fill="none" stroke="#f2f2f2" stroke-width="2"/><path d="M78 751.9 H121 L137 736.9" fill="none" stroke="#f2f2f2" stroke-width="2"/><path d="M78 757.2 H121 L137 742.2" fill="none" stroke="#f2f2f2" stroke-width="2"/><path d="M78 762.6 H121 L137 747.6" fill="none" stroke="#f2f2f2" stroke-width="2"/><path d="M78 768.0 H121 L137 753.0" fill="none" stroke="#f2f2f2" stroke-width="2"/></svg>
<div style="position:absolute;left:0px;top:776px;width:938px;height:63px;background:#fff"></div>
<div style="position:absolute;left:15px;top:806px;width:908px;height:2px;background:#e2743c"></div>
<svg style="position:absolute;left:0;top:796px" width="940" height="24"><polygon points="7,11.5 15,4 15,20" fill="#e8692a"/><polygon points="931,11.5 923,4 923,20" fill="#e8692a"/></svg>
<div class="t" style="left:17.0px;top:822.5px;font-size:14.8px;color:#ababab;font-weight:normal;">235397</div>
<div class="t" style="left:872.0px;top:780.0px;font-size:14.8px;color:#ababab;font-weight:normal;">235996</div>
<div style="position:absolute;left:0px;top:839px;width:1600px;height:2px;background:#e3e3e3"></div>
<div style="position:absolute;left:938px;top:86px;width:143px;height:753px;background:#fff"></div>
<div style="position:absolute;left:1005px;top:98px;width:2px;height:706px;background:#e2743c"></div>
<svg style="position:absolute;left:0;top:0;overflow:visible" width="1" height="1"><rect x="996" y="104" width="2" height="1.6" fill="#b9b9b9"/><rect x="1013" y="104" width="2" height="1.6" fill="#b9b9b9"/><rect x="996" y="109" width="2" height="1.6" fill="#b9b9b9"/><rect x="1013" y="109" width="2" height="1.6" fill="#b9b9b9"/><rect x="996" y="114" width="2" height="1.6" fill="#b9b9b9"/><rect x="1013" y="114" width="2" height="1.6" fill="#b9b9b9"/><rect x="996" y="119" width="2" height="1.6" fill="#b9b9b9"/><rect x="1013" y="119" width="2" height="1.6" fill="#b9b9b9"/><rect x="996" y="124" width="2" height="1.6" fill="#b9b9b9"/><rect x="1013" y="124" width="2" height="1.6" fill="#b9b9b9"/><rect x="996" y="129" width="2" height="1.6" fill="#b9b9b9"/><rect x="1013" y="129" width="2" height="1.6" fill="#b9b9b9"/><rect x="996" y="134" width="2" height="1.6" fill="#b9b9b9"/><rect x="1013" y="134" width="2" height="1.6" fill="#b9b9b9"/><rect x="996" y="139" width="2" height="1.6" fill="#b9b9b9"/><rect x="1013" y="139" width="2" height="1.6" fill="#b9b9b9"/><rect x="996" y="144" width="2" height="1.6" fill="#b9b9b9"/><rect x="1013" y="144" width="2" height="1.6" fill="#b9b9b9"/><rect x="996" y="149" width="2" height="1.6" fill="#b9b9b9"/><rect x="1013" y="149" width="2" height="1.6" fill="#b9b9b9"/><rect x="996" y="154" width="2" height="1.6" fill="#b9b9b9"/><rect x="1013" y="154" width="2" height="1.6" fill="#b9b9b9"/><rect x="996" y="159" width="2" height="1.6" fill="#b9b9b9"/><rect x="1013" y="159" width="2" height="1.6" fill="#b9b9b9"/><rect x="996" y="164" width="2" height="1.6" fill="#b9b9b9"/><rect x="1013" y="164" width="2" height="1.6" fill="#b9b9b9"/><rect x="996" y="169" width="2" height="1.6" fill="#b9b9b9"/><rect x="1013" y="169" width="2" height="1.6" fill="#b9b9b9"/><rect x="996" y="174" width="2" height="1.6" fill="#b9b9b9"/><rect x="1013" y="174" width="2" height="1.6" fill="#b9b9b9"/><rect x="996" y="179" width="2" height="1.6" fill="#b9b9b9"/><rect x="1013" y="179" width="2" height="1.6" fill="#b9b9b9"/><rect x="996" y="184" width="2" height="1.6" fill="#b9b9b9"/><rect x="1013" y="184" width="2" height="1.6" fill="#b9b9b9"/><rect x="996" y="189" width="2" height="1.6" fill="#b9b9b9"/><rect x="1013" y="189" width="2" height="1.6" fill="#b9b9b9"/><rect x="996" y="194" width="2" height="1.6" fill="#b9b9b9"/><rect x="1013" y="194" width="2" height="1.6" fill="#b9b9b9"/><rect x="996" y="199" width="2" height="1.6" fill="#b9b9b9"/><rect x="1013" y="199" width="2" height="1.6" fill="#b9b9b9"/><rect x="996" y="204" width="2" height="1.6" fill="#b9b9b9"/><rect x="1013" y="204" width="2" height="1.6" fill="#b9b9b9"/><rect x="996" y="209" width="2" height="1.6" fill="#b9b9b9"/><rect x="1013" y="209" width="2" height="1.6" fill="#b9b9b9"/><rect x="996" y="214" width="2" height="1.6" fill="#b9b9b9"/><rect x="1013" y="214" width="2" height="1.6" fill="#b9b9b9"/><rect x="996" y="219" width="2" height="1.6" fill="#b9b9b9"/><rect x="1013" y="219" width="2" height="1.6" fill="#b9b9b9"/><rect x="996" y="224" width="2" height="1.6" fill="#b9b9b9"/><rect x="1013" y="224" width="2" height="1.6" fill="#b9b9b9"/><rect x="996" y="229" width="2" height="1.6" fill="#b9b9b9"/><rect x="1013" y="229" width="2" height="1.6" fill="#b9b9b9"/><rect x="996" y="234" width="2" height="1.6" fill="#b9b9b9"/><rect x="1013" y="234" width="2" height="1.6" fill="#b9b9b9"/><rect x="996" y="239" width="2" height="1.6" fill="#b9b9b9"/><rect x="1013" y="239" width="2" height="1.6" fill="#b9b9b9"/><rect x="996" y="244" width="2" height="1.6" fill="#b9b9b9"/><rect x="1013" y="244" width="2" height="1.6" fill="#b9b9b9"/><rect x="996" y="249" width="2" height="1.6" fill="#b9b9b9"/><rect x="1013" y="249" width="2" height="1.6" fill="#b9b9b9"/><rect x="996" y="254" width="2" height="1.6" fill="#b9b9b9"/><rect x="1013" y="254" width="2" height="1.6" fill="#b9b9b9"/><rect x="996" y="259" width="2" height="1.6" fill="#b9b9b9"/><rect x="1013" y="259" width="2" height="1.6" fill="#b9b9b9"/><rect x="996" y="264" width="2" height="1.6" fill="#b9b9b9"/><rect x="1013" y="264" width="2" height="1.6" fill="#b9b9b9"/><rect x="996" y="269" width="2" height="1.6" fill="#b9b9b9"/><rect x="1013" y="269" width="2" height="1.6" fill="#b9b9b9"/><rect x="996" y="274" width="2" height="1.6" fill="#b9b9b9"/><rect x="1013" y="274" width="2" height="1.6" fill="#b9b9b9"/><rect x="996" y="279" width="2" height="1.6" fill="#b9b9b9"/><rect x="1013" y="279" width="2" height="1.6" fill="#b9b9b9"/><rect x="996" y="284" width="2" height="1.6" fill="#b9b9b9"/><rect x="1013" y="284" width="2" height="1.6" fill="#b9b9b9"/><rect x="996" y="289" width="2" height="1.6" fill="#b9b9b9"/><rect x="1013" y="289" width="2" height="1.6" fill="#b9b9b9"/><rect x="996" y="294" width="2" height="1.6" fill="#b9b9b9"/><rect x="1013" y="294" width="2" height="1.6" fill="#b9b9b9"/><rect x="996" y="299" width="2" height="1.6" fill="#b9b9b9"/><rect x="1013" y="299" width="2" height="1.6" fill="#b9b9b9"/><rect x="996" y="304" width="2" height="1.6" fill="#b9b9b9"/><rect x="1013" y="304" width="2" height="1.6" fill="#b9b9b9"/><rect x="996" y="309" width="2" height="1.6" fill="#b9b9b9"/><rect x="1013" y="309" width="2" height="1.6" fill="#b9b9b9"/><rect x="996" y="314" width="2" height="1.6" fill="#b9b9b9"/><rect x="1013" y="314" width="2" height="1.6" fill="#b9b9b9"/><rect x="996" y="319" width="2" height="1.6" fill="#b9b9b9"/><rect x="1013" y="319" width="2" height="1.6" fill="#b9b9b9"/><rect x="996" y="324" width="2" height="1.6" fill="#b9b9b9"/><rect x="1013" y="324" width="2" height="1.6" fill="#b9b9b9"/><rect x="996" y="329" width="2" height="1.6" fill="#b9b9b9"/><rect x="1013" y="329" width="2" height="1.6" fill="#b9b9b9"/><rect x="996" y="334" width="2" height="1.6" fill="#b9b9b9"/><rect x="1013" y="334" width="2" height="1.6" fill="#b9b9b9"/><rect x="996" y="339" width="2" height="1.6" fill="#b9b9b9"/><rect x="1013" y="339" width="2" height="1.6" fill="#b9b9b9"/><rect x="996" y="344" width="2" height="1.6" fill="#b9b9b9"/><rect x="1013" y="344" width="2" height="1.6" fill="#b9b9b9"/><rect x="996" y="349" width="2" height="1.6" fill="#b9b9b9"/><rect x="1013" y="349" width="2" height="1.6" fill="#b9b9b9"/><rect x="996" y="354" width="2" height="1.6" fill="#b9b9b9"/><rect x="1013" y="354" width="2" height="1.6" fill="#b9b9b9"/><rect x="996" y="359" width="2" height="1.6" fill="#b9b9b9"/><rect x="1013" y="359" width="2" height="1.6" fill="#b9b9b9"/><rect x="996" y="364" width="2" height="1.6" fill="#b9b9b9"/><rect x="1013" y="364" width="2" height="1.6" fill="#b9b9b9"/><rect x="996" y="369" width="2" height="1.6" fill="#b9b9b9"/><rect x="1013" y="369" width="2" height="1.6" fill="#b9b9b9"/><rect x="996" y="374" width="2" height="1.6" fill="#b9b9b9"/><rect x="1013" y="374" width="2" height="1.6" fill="#b9b9b9"/><rect x="996" y="379" width="2" height="1.6" fill="#b9b9b9"/><rect x="1013" y="379" width="2" height="1.6" fill="#b9b9b9"/><rect x="996" y="384" width="2" height="1.6" fill="#b9b9b9"/><rect x="1013" y="384" width="2" height="1.6" fill="#b9b9b9"/><rect x="996" y="389" width="2" height="1.6" fill="#b9b9b9"/><rect x="1013" y="389" width="2" height="1.6" fill="#b9b9b9"/><rect x="996" y="394" width="2" height="1.6" fill="#b9b9b9"/><rect x="1013" y="394" width="2" height="1.6" fill="#b9b9b9"/><rect x="996" y="399" width="2" height="1.6" fill="#b9b9b9"/><rect x="1013" y="399" width="2" height="1.6" fill="#b9b9b9"/><rect x="996" y="404" width="2" height="1.6" fill="#b9b9b9"/><rect x="1013" y="404" width="2" height="1.6" fill="#b9b9b9"/><rect x="996" y="409" width="2" height="1.6" fill="#b9b9b9"/><rect x="1013" y="409" width="2" height="1.6" fill="#b9b9b9"/><rect x="996" y="414" width="2" height="1.6" fill="#b9b9b9"/><rect x="1013" y="414" width="2" height="1.6" fill="#b9b9b9"/><rect x="996" y="419" width="2" height="1.6" fill="#b9b9b9"/><rect x="1013" y="419" width="2" height="1.6" fill="#b9b9b9"/><rect x="996" y="424" width="2" height="1.6" fill="#b9b9b9"/><rect x="1013" y="424" width="2" height="1.6" fill="#b9b9b9"/><rect x="996" y="429" width="2" height="1.6" fill="#b9b9b9"/><rect x="1013" y="429" width="2" height="1.6" fill="#b9b9b9"/><rect x="996" y="434" width="2" height="1.6" fill="#b9b9b9"/><rect x="1013" y="434" width="2" height="1.6" fill="#b9b9b9"/><rect x="996" y="439" width="2" height="1.6" fill="#b9b9b9"/><rect x="1013" y="439" width="2" height="1.6" fill="#b9b9b9"/><rect x="996" y="444" width="2" height="1.6" fill="#b9b9b9"/><rect x="1013" y="444" width="2" height="1.6" fill="#b9b9b9"/><rect x="996" y="449" width="2" height="1.6" fill="#b9b9b9"/><rect x="1013" y="449" width="2" height="1.6" fill="#b9b9b9"/><rect x="996" y="454" width="2" height="1.6" fill="#b9b9b9"/><rect x="1013" y="454" width="2" height="1.6" fill="#b9b9b9"/><rect x="996" y="459" width="2" height="1.6" fill="#b9b9b9"/><rect x="1013" y="459" width="2" height="1.6" fill="#b9b9b9"/><rect x="996" y="464" width="2" height="1.6" fill="#b9b9b9"/><rect x="1013" y="464" width="2" height="1.6" fill="#b9b9b9"/><rect x="996" y="469" width="2" height="1.6" fill="#b9b9b9"/><rect x="1013" y="469" width="2" height="1.6" fill="#b9b9b9"/><rect x="996" y="474" width="2" height="1.6" fill="#b9b9b9"/><rect x="1013" y="474" width="2" height="1.6" fill="#b9b9b9"/><rect x="996" y="479" width="2" height="1.6" fill="#b9b9b9"/><rect x="1013" y="479" width="2" height="1.6" fill="#b9b9b9"/><rect x="996" y="484" width="2" height="1.6" fill="#b9b9b9"/><rect x="1013" y="484" width="2" height="1.6" fill="#b9b9b9"/><rect x="996" y="489" width="2" height="1.6" fill="#b9b9b9"/><rect x="1013" y="489" width="2" height="1.6" fill="#b9b9b9"/><rect x="996" y="494" width="2" height="1.6" fill="#b9b9b9"/><rect x="1013" y="494" width="2" height="1.6" fill="#b9b9b9"/><rect x="996" y="499" width="2" height="1.6" fill="#b9b9b9"/><rect x="1013" y="499" width="2" height="1.6" fill="#b9b9b9"/><rect x="996" y="504" width="2" height="1.6" fill="#b9b9b9"/><rect x="1013" y="504" width="2" height="1.6" fill="#b9b9b9"/><rect x="996" y="509" width="2" height="1.6" fill="#b9b9b9"/><rect x="1013" y="509" width="2" height="1.6" fill="#b9b9b9"/><rect x="996" y="514" width="2" height="1.6" fill="#b9b9b9"/><rect x="1013" y="514" width="2" height="1.6" fill="#b9b9b9"/><rect x="996" y="519" width="2" height="1.6" fill="#b9b9b9"/><rect x="1013" y="519" width="2" height="1.6" fill="#b9b9b9"/><rect x="996" y="524" width="2" height="1.6" fill="#b9b9b9"/><rect x="1013" y="524" width="2" height="1.6" fill="#b9b9b9"/><rect x="996" y="529" width="2" height="1.6" fill="#b9b9b9"/><rect x="1013" y="529" width="2" height="1.6" fill="#b9b9b9"/><rect x="996" y="534" width="2" height="1.6" fill="#b9b9b9"/><rect x="1013" y="534" width="2" height="1.6" fill="#b9b9b9"/><rect x="996" y="539" width="2" height="1.6" fill="#b9b9b9"/><rect x="1013" y="539" width="2" height="1.6" fill="#b9b9b9"/><rect x="996" y="544" width="2" height="1.6" fill="#b9b9b9"/><rect x="1013" y="544" width="2" height="1.6" fill="#b9b9b9"/><rect x="996" y="549" width="2" height="1.6" fill="#b9b9b9"/><rect x="1013" y="549" width="2" height="1.6" fill="#b9b9b9"/><rect x="996" y="554" width="2" height="1.6" fill="#b9b9b9"/><rect x="1013" y="554" width="2" height="1.6" fill="#b9b9b9"/><rect x="996" y="559" width="2" height="1.6" fill="#b9b9b9"/><rect x="1013" y="559" width="2" height="1.6" fill="#b9b9b9"/><rect x="996" y="564" width="2" height="1.6" fill="#b9b9b9"/><rect x="1013" y="564" width="2" height="1.6" fill="#b9b9b9"/><rect x="996" y="569" width="2" height="1.6" fill="#b9b9b9"/><rect x="1013" y="569" width="2" height="1.6" fill="#b9b9b9"/><rect x="996" y="574" width="2" height="1.6" fill="#b9b9b9"/><rect x="1013" y="574" width="2" height="1.6" fill="#b9b9b9"/><rect x="996" y="579" width="2" height="1.6" fill="#b9b9b9"/><rect x="1013" y="579" width="2" height="1.6" fill="#b9b9b9"/><rect x="996" y="584" width="2" height="1.6" fill="#b9b9b9"/><rect x="1013" y="584" width="2" height="1.6" fill="#b9b9b9"/><rect x="996" y="589" width="2" height="1.6" fill="#b9b9b9"/><rect x="1013" y="589" width="2" height="1.6" fill="#b9b9b9"/><rect x="996" y="594" width="2" height="1.6" fill="#b9b9b9"/><rect x="1013" y="594" width="2" height="1.6" fill="#b9b9b9"/><rect x="996" y="599" width="2" height="1.6" fill="#b9b9b9"/><rect x="1013" y="599" width="2" height="1.6" fill="#b9b9b9"/><rect x="996" y="604" width="2" height="1.6" fill="#b9b9b9"/><rect x="1013" y="604" width="2" height="1.6" fill="#b9b9b9"/><rect x="996" y="609" width="2" height="1.6" fill="#b9b9b9"/><rect x="1013" y="609" width="2" height="1.6" fill="#b9b9b9"/><rect x="996" y="614" width="2" height="1.6" fill="#b9b9b9"/><rect x="1013" y="614" width="2" height="1.6" fill="#b9b9b9"/><rect x="996" y="619" width="2" height="1.6" fill="#b9b9b9"/><rect x="1013" y="619" width="2" height="1.6" fill="#b9b9b9"/><rect x="996" y="624" width="2" height="1.6" fill="#b9b9b9"/><rect x="1013" y="624" width="2" height="1.6" fill="#b9b9b9"/><rect x="996" y="629" width="2" height="1.6" fill="#b9b9b9"/><rect x="1013" y="629" width="2" height="1.6" fill="#b9b9b9"/><rect x="996" y="634" width="2" height="1.6" fill="#b9b9b9"/><rect x="1013" y="634" width="2" height="1.6" fill="#b9b9b9"/><rect x="996" y="639" width="2" height="1.6" fill="#b9b9b9"/><rect x="1013" y="639" width="2" height="1.6" fill="#b9b9b9"/><rect x="996" y="644" width="2" height="1.6" fill="#b9b9b9"/><rect x="1013" y="644" width="2" height="1.6" fill="#b9b9b9"/><rect x="996" y="649" width="2" height="1.6" fill="#b9b9b9"/><rect x="1013" y="649" width="2" height="1.6" fill="#b9b9b9"/><rect x="996" y="654" width="2" height="1.6" fill="#b9b9b9"/><rect x="1013" y="654" width="2" height="1.6" fill="#b9b9b9"/><rect x="996" y="659" width="2" height="1.6" fill="#b9b9b9"/><rect x="1013" y="659" width="2" height="1.6" fill="#b9b9b9"/><rect x="996" y="664" width="2" height="1.6" fill="#b9b9b9"/><rect x="1013" y="664" width="2" height="1.6" fill="#b9b9b9"/><rect x="996" y="669" width="2" height="1.6" fill="#b9b9b9"/><rect x="1013" y="669" width="2" height="1.6" fill="#b9b9b9"/><rect x="996" y="674" width="2" height="1.6" fill="#b9b9b9"/><rect x="1013" y="674" width="2" height="1.6" fill="#b9b9b9"/><rect x="996" y="679" width="2" height="1.6" fill="#b9b9b9"/><rect x="1013" y="679" width="2" height="1.6" fill="#b9b9b9"/><rect x="996" y="684" width="2" height="1.6" fill="#b9b9b9"/><rect x="1013" y="684" width="2" height="1.6" fill="#b9b9b9"/><rect x="996" y="689" width="2" height="1.6" fill="#b9b9b9"/><rect x="1013" y="689" width="2" height="1.6" fill="#b9b9b9"/><rect x="996" y="694" width="2" height="1.6" fill="#b9b9b9"/><rect x="1013" y="694" width="2" height="1.6" fill="#b9b9b9"/><rect x="996" y="699" width="2" height="1.6" fill="#b9b9b9"/><rect x="1013" y="699" width="2" height="1.6" fill="#b9b9b9"/><rect x="996" y="704" width="2" height="1.6" fill="#b9b9b9"/><rect x="1013" y="704" width="2" height="1.6" fill="#b9b9b9"/><rect x="996" y="709" width="2" height="1.6" fill="#b9b9b9"/><rect x="1013" y="709" width="2" height="1.6" fill="#b9b9b9"/><rect x="996" y="714" width="2" height="1.6" fill="#b9b9b9"/><rect x="1013" y="714" width="2" height="1.6" fill="#b9b9b9"/><rect x="996" y="719" width="2" height="1.6" fill="#b9b9b9"/><rect x="1013" y="719" width="2" height="1.6" fill="#b9b9b9"/><rect x="996" y="724" width="2" height="1.6" fill="#b9b9b9"/><rect x="1013" y="724" width="2" height="1.6" fill="#b9b9b9"/><rect x="996" y="729" width="2" height="1.6" fill="#b9b9b9"/><rect x="1013" y="729" width="2" height="1.6" fill="#b9b9b9"/><rect x="996" y="734" width="2" height="1.6" fill="#b9b9b9"/><rect x="1013" y="734" width="2" height="1.6" fill="#b9b9b9"/><rect x="996" y="739" width="2" height="1.6" fill="#b9b9b9"/><rect x="1013" y="739" width="2" height="1.6" fill="#b9b9b9"/><rect x="996" y="744" width="2" height="1.6" fill="#b9b9b9"/><rect x="1013" y="744" width="2" height="1.6" fill="#b9b9b9"/><rect x="996" y="749" width="2" height="1.6" fill="#b9b9b9"/><rect x="1013" y="749" width="2" height="1.6" fill="#b9b9b9"/><rect x="996" y="754" width="2" height="1.6" fill="#b9b9b9"/><rect x="1013" y="754" width="2" height="1.6" fill="#b9b9b9"/><rect x="996" y="759" width="2" height="1.6" fill="#b9b9b9"/><rect x="1013" y="759" width="2" height="1.6" fill="#b9b9b9"/><rect x="996" y="764" width="2" height="1.6" fill="#b9b9b9"/><rect x="1013" y="764" width="2" height="1.6" fill="#b9b9b9"/><rect x="996" y="769" width="2" height="1.6" fill="#b9b9b9"/><rect x="1013" y="769" width="2" height="1.6" fill="#b9b9b9"/><rect x="996" y="774" width="2" height="1.6" fill="#b9b9b9"/><rect x="1013" y="774" width="2" height="1.6" fill="#b9b9b9"/><rect x="996" y="779" width="2" height="1.6" fill="#b9b9b9"/><rect x="1013" y="779" width="2" height="1.6" fill="#b9b9b9"/><rect x="996" y="784" width="2" height="1.6" fill="#b9b9b9"/><rect x="1013" y="784" width="2" height="1.6" fill="#b9b9b9"/><rect x="996" y="789" width="2" height="1.6" fill="#b9b9b9"/><rect x="1013" y="789" width="2" height="1.6" fill="#b9b9b9"/><rect x="996" y="794" width="2" height="1.6" fill="#b9b9b9"/><rect x="1013" y="794" width="2" height="1.6" fill="#b9b9b9"/><rect x="996" y="799" width="2" height="1.6" fill="#b9b9b9"/><rect x="1013" y="799" width="2" height="1.6" fill="#b9b9b9"/><rect x="992" y="100.2" width="7" height="1.4" fill="#b0b0b0"/><rect x="1012" y="100.2" width="7" height="1.4" fill="#b0b0b0"/><rect x="992" y="126.2" width="7" height="1.4" fill="#b0b0b0"/><rect x="1012" y="126.2" width="7" height="1.4" fill="#b0b0b0"/><rect x="992" y="169.2" width="7" height="1.4" fill="#b0b0b0"/><rect x="1012" y="169.2" width="7" height="1.4" fill="#b0b0b0"/><rect x="992" y="212.2" width="7" height="1.4" fill="#b0b0b0"/><rect x="1012" y="212.2" width="7" height="1.4" fill="#b0b0b0"/><rect x="992" y="253.2" width="7" height="1.4" fill="#b0b0b0"/><rect x="1012" y="253.2" width="7" height="1.4" fill="#b0b0b0"/><rect x="992" y="296.2" width="7" height="1.4" fill="#b0b0b0"/><rect x="1012" y="296.2" width="7" height="1.4" fill="#b0b0b0"/><rect x="992" y="339.2" width="7" height="1.4" fill="#b0b0b0"/><rect x="1012" y="339.2" width="7" height="1.4" fill="#b0b0b0"/><rect x="992" y="380.2" width="7" height="1.4" fill="#b0b0b0"/><rect x="1012" y="380.2" width="7" height="1.4" fill="#b0b0b0"/><rect x="992" y="423.2" width="7" height="1.4" fill="#b0b0b0"/><rect x="1012" y="423.2" width="7" height="1.4" fill="#b0b0b0"/><rect x="992" y="466.2" width="7" height="1.4" fill="#b0b0b0"/><rect x="1012" y="466.2" width="7" height="1.4" fill="#b0b0b0"/><rect x="992" y="507.2" width="7" height="1.4" fill="#b0b0b0"/><rect x="1012" y="507.2" width="7" height="1.4" fill="#b0b0b0"/><rect x="992" y="550.2" width="7" height="1.4" fill="#b0b0b0"/><rect x="1012" y="550.2" width="7" height="1.4" fill="#b0b0b0"/><rect x="992" y="594.2" width="7" height="1.4" fill="#b0b0b0"/><rect x="1012" y="594.2" width="7" height="1.4" fill="#b0b0b0"/><rect x="992" y="634.2" width="7" height="1.4" fill="#b0b0b0"/><rect x="1012" y="634.2" width="7" height="1.4" fill="#b0b0b0"/><rect x="992" y="677.2" width="7" height="1.4" fill="#b0b0b0"/><rect x="1012" y="677.2" width="7" height="1.4" fill="#b0b0b0"/><rect x="992" y="720.2" width="7" height="1.4" fill="#b0b0b0"/><rect x="1012" y="720.2" width="7" height="1.4" fill="#b0b0b0"/><rect x="992" y="761.2" width="7" height="1.4" fill="#b0b0b0"/><rect x="1012" y="761.2" width="7" height="1.4" fill="#b0b0b0"/><rect x="992" y="792.2" width="7" height="1.4" fill="#b0b0b0"/><rect x="1012" y="792.2" width="7" height="1.4" fill="#b0b0b0"/><polygon points="1006,92.5 1014.5,101 997.5,101" fill="#e8692a" stroke="#e8692a" stroke-width="1.5" stroke-linejoin="round"/><polygon points="1006,812 1014.5,805 997.5,805" fill="#e8692a" stroke="#e8692a" stroke-width="1.5" stroke-linejoin="round"/><path d="M1001.5 826 V822.5 a4.3 4.3 0 0 1 8.6 0" fill="none" stroke="#e8692a" stroke-width="2.6"/><rect x="998.5" y="826" width="15" height="10" rx="1.2" fill="#e8692a"/><polygon points="1004,828.5 1009,831 1004,833.5" fill="#fff"/><polygon points="1071.30,828.00 1069.29,830.60 1068.87,833.87 1065.60,834.29 1063.00,836.30 1060.40,834.29 1057.13,833.87 1056.71,830.60 1054.70,828.00 1056.71,825.40 1057.13,822.13 1060.40,821.71 1063.00,819.70 1065.60,821.71 1068.87,822.13 1069.29,825.40" fill="#777" stroke="#777" stroke-width="1" stroke-linejoin="round"/><circle cx="1063" cy="828" r="5.64" fill="#f2e4dc"/><circle cx="1063" cy="828" r="3.74" fill="none" stroke="#e8873e" stroke-width="1.1"/></svg>
<div class="t" style="left:1027.0px;top:94.1px;font-size:14.8px;color:#ababab;font-weight:normal;">83,00</div>
<div class="t" style="left:1027.0px;top:120.1px;font-size:14.8px;color:#ababab;font-weight:normal;">80,00</div>
<div class="t" style="left:1027.0px;top:163.1px;font-size:14.8px;color:#ababab;font-weight:normal;">74,90</div>
<div class="t" style="left:1027.0px;top:206.1px;font-size:14.8px;color:#ababab;font-weight:normal;">69,80</div>
<div class="t" style="left:1027.0px;top:247.1px;font-size:14.8px;color:#ababab;font-weight:normal;">65,00</div>
<div class="t" style="left:1027.0px;top:290.1px;font-size:14.8px;color:#ababab;font-weight:normal;">59,90</div>
<div class="t" style="left:1027.0px;top:333.1px;font-size:14.8px;color:#ababab;font-weight:normal;">54,80</div>
<div class="t" style="left:1027.0px;top:374.1px;font-size:14.8px;color:#ababab;font-weight:normal;">50,00</div>
<div class="t" style="left:1027.0px;top:417.1px;font-size:14.8px;color:#ababab;font-weight:normal;">44,90</div>
<div class="t" style="left:1027.0px;top:460.1px;font-size:14.8px;color:#ababab;font-weight:normal;">39,80</div>
<div class="t" style="left:1027.0px;top:501.1px;font-size:14.8px;color:#ababab;font-weight:normal;">35,00</div>
<div class="t" style="left:1027.0px;top:544.1px;font-size:14.8px;color:#ababab;font-weight:normal;">29,90</div>
<div class="t" style="left:1027.0px;top:588.1px;font-size:14.8px;color:#ababab;font-weight:normal;">24,80</div>
<div class="t" style="left:1027.0px;top:628.1px;font-size:14.8px;color:#ababab;font-weight:normal;">20,00</div>
<div class="t" style="left:1027.0px;top:671.1px;font-size:14.8px;color:#ababab;font-weight:normal;">14,90</div>
<div class="t" style="left:1027.0px;top:714.1px;font-size:14.8px;color:#ababab;font-weight:normal;">9,80</div>
<div class="t" style="left:1027.0px;top:755.1px;font-size:14.8px;color:#ababab;font-weight:normal;">5,00</div>
<div class="t" style="left:1027.0px;top:786.1px;font-size:14.8px;color:#ababab;font-weight:normal;">0,20</div>
<div class="t" style="left:949.0px;top:85.8px;font-size:14.8px;color:#ababab;font-weight:normal;">83,00</div>
<div class="t" style="left:949.0px;top:106.5px;font-size:14.8px;color:#ababab;font-weight:normal;">(277)</div>
<div class="t" style="left:1027.0px;top:807.5px;font-size:14.8px;color:#ababab;font-weight:normal;">(1)</div>
<div style="position:absolute;left:1081px;top:86px;width:519px;height:753px;background:#fff"></div>
<div style="position:absolute;left:1580px;top:86px;width:20px;height:714px;background:#f1f1f1"></div>
<div style="position:absolute;left:1585px;top:108px;width:9px;height:472px;background:#878787"></div>
<div class="t" style="left:1082.0px;top:89.9px;font-size:14.7px;color:#1b1b1b;font-weight:normal;">Printinstellingen :</div>
<div style="position:absolute;left:1081px;top:108px;width:471px;height:27px;background:#fff;border:1px solid #a6a6a6;box-sizing:border-box;border-radius:1px"></div>
<svg style="position:absolute;left:0;top:0;overflow:visible" width="1" height="1"><path d="M1536.5 119.5 L1541 124.0 L1545.5 119.5" fill="none" stroke="#555" stroke-width="1.1"/></svg>
<svg style="position:absolute;left:0;top:0;overflow:visible" width="1" height="1"><polygon points="1111.80,121.30 1109.76,123.94 1109.34,127.24 1106.04,127.66 1103.40,129.70 1100.76,127.66 1097.46,127.24 1097.04,123.94 1095.00,121.30 1097.04,118.66 1097.46,115.36 1100.76,114.94 1103.40,112.90 1106.04,114.94 1109.34,115.36 1109.76,118.66" fill="#777" stroke="#777" stroke-width="1" stroke-linejoin="round"/><circle cx="1103.4" cy="121.3" r="5.71" fill="#f2e4dc"/><circle cx="1103.4" cy="121.3" r="3.78" fill="none" stroke="#e8873e" stroke-width="1.1"/></svg>
<svg style="position:absolute;left:1123px;top:112px" width="16" height="18" viewBox="0 0 16 18"><path d="M3.5 8 V5.5 a4.5 4.5 0 0 1 9 0 V8" fill="none" stroke="#7b7b7b" stroke-width="2.6"/><rect x="1" y="7.5" width="14" height="10" rx="1.5" fill="#7b7b7b"/><polygon points="6.5,10.5 10.5,12.8 6.5,15" fill="#fff"/></svg>
<div class="t" style="left:1147.0px;top:115.1px;font-size:14.35px;color:#1b1b1b;font-weight:normal;">0.30mm DRAFT (aangepast)</div>
<svg style="position:absolute;left:0;top:0;overflow:visible" width="1" height="1"><polygon points="1573.40,121.50 1571.36,124.14 1570.94,127.44 1567.64,127.86 1565.00,129.90 1562.36,127.86 1559.06,127.44 1558.64,124.14 1556.60,121.50 1558.64,118.86 1559.06,115.56 1562.36,115.14 1565.00,113.10 1567.64,115.14 1570.94,115.56 1571.36,118.86" fill="#777" stroke="#777" stroke-width="1" stroke-linejoin="round"/><circle cx="1565" cy="121.5" r="5.71" fill="#f2e4dc"/><circle cx="1565" cy="121.5" r="3.78" fill="none" stroke="#e8873e" stroke-width="1.1"/><polygon points="1573.40,173.50 1571.36,176.14 1570.94,179.44 1567.64,179.86 1565.00,181.90 1562.36,179.86 1559.06,179.44 1558.64,176.14 1556.60,173.50 1558.64,170.86 1559.06,167.56 1562.36,167.14 1565.00,165.10 1567.64,167.14 1570.94,167.56 1571.36,170.86" fill="#777" stroke="#777" stroke-width="1" stroke-linejoin="round"/><circle cx="1565" cy="173.5" r="5.71" fill="#f2e4dc"/><circle cx="1565" cy="173.5" r="3.78" fill="none" stroke="#e8873e" stroke-width="1.1"/><polygon points="1573.40,225.00 1571.36,227.64 1570.94,230.94 1567.64,231.36 1565.00,233.40 1562.36,231.36 1559.06,230.94 1558.64,227.64 1556.60,225.00 1558.64,222.36 1559.06,219.06 1562.36,218.64 1565.00,216.60 1567.64,218.64 1570.94,219.06 1571.36,222.36" fill="#777" stroke="#777" stroke-width="1" stroke-linejoin="round"/><circle cx="1565" cy="225" r="5.71" fill="#f2e4dc"/><circle cx="1565" cy="225" r="3.78" fill="none" stroke="#e8873e" stroke-width="1.1"/></svg>
<div class="t" style="left:1082.0px;top:141.8px;font-size:14.4px;color:#1b1b1b;font-weight:normal;">Filament :</div>
<div style="position:absolute;left:1081px;top:160px;width:471px;height:27px;background:#fff;border:1px solid #a6a6a6;box-sizing:border-box;border-radius:1px"></div>
<svg style="position:absolute;left:0;top:0;overflow:visible" width="1" height="1"><path d="M1536.5 171.5 L1541 176.0 L1545.5 171.5" fill="none" stroke="#555" stroke-width="1.1"/></svg>
<div style="position:absolute;left:1088px;top:163.5px;width:30px;height:19.5px;background:#f98a0a"></div>
<svg style="position:absolute;left:1123px;top:164px" width="16" height="18" viewBox="0 0 16 18"><path d="M3.5 8 V5.5 a4.5 4.5 0 0 1 9 0 V8" fill="none" stroke="#7b7b7b" stroke-width="2.6"/><rect x="1" y="7.5" width="14" height="10" rx="1.5" fill="#7b7b7b"/><polygon points="6.5,10.5 10.5,12.8 6.5,15" fill="#fff"/></svg>
<div class="t" style="left:1147.0px;top:166.7px;font-size:14.5px;color:#1b1b1b;font-weight:normal;">Prusament PLA</div>
<div class="t" style="left:1082.0px;top:193.5px;font-size:14.4px;color:#1b1b1b;font-weight:normal;">Printer :</div>
<div style="position:absolute;left:1081px;top:211px;width:471px;height:27px;background:#fff;border:1px solid #a6a6a6;box-sizing:border-box;border-radius:1px"></div>
<svg style="position:absolute;left:0;top:0;overflow:visible" width="1" height="1"><path d="M1536.5 222.5 L1541 227.0 L1545.5 222.5" fill="none" stroke="#555" stroke-width="1.1"/></svg>
<svg style="position:absolute;left:1094.5px;top:216px" width="18" height="18" viewBox="0 0 18 18"><rect x="0.8" y="0.8" width="16.4" height="16.4" fill="#fafafa" stroke="#7a7a7a" stroke-width="1.4"/><path d="M1 5.5 H17" stroke="#7a7a7a" stroke-width="1.2"/><path d="M1 14.8 H17" stroke="#9a9a9a" stroke-width="2"/><circle cx="5" cy="6.5" r="2.2" fill="#f26b1d"/></svg>
<svg style="position:absolute;left:1123px;top:216px" width="16" height="18" viewBox="0 0 16 18"><path d="M3.5 8 V5.5 a4.5 4.5 0 0 1 9 0 V8" fill="none" stroke="#7b7b7b" stroke-width="2.6"/><rect x="1" y="7.5" width="14" height="10" rx="1.5" fill="#7b7b7b"/><polygon points="6.5,10.5 10.5,12.8 6.5,15" fill="#fff"/></svg>
<div class="t" style="left:1147.0px;top:218.7px;font-size:14.5px;color:#1b1b1b;font-weight:normal;">Original Prusa i3 MK3S &amp; MK3S+</div>
<div class="t" style="left:1082.0px;top:252.4px;font-size:15.8px;color:#1b1b1b;font-weight:normal;">Support:</div>
<div style="position:absolute;left:1143px;top:246.5px;width:409px;height:26.0px;background:#fff;border:1px solid #a6a6a6;box-sizing:border-box;border-radius:1px"></div>
<svg style="position:absolute;left:0;top:0;overflow:visible" width="1" height="1"><path d="M1536.5 257.5 L1541 262.0 L1545.5 257.5" fill="none" stroke="#555" stroke-width="1.1"/></svg>
<div class="t" style="left:1158.6px;top:253.5px;font-size:14.5px;color:#1b1b1b;font-weight:normal;">Geen</div>
<div class="t" style="left:1082.0px;top:283.3px;font-size:14.5px;color:#1b1b1b;font-weight:normal;">Vulling:</div>
<div style="position:absolute;left:1134px;top:276.5px;width:100px;height:26.0px;background:#fff;border:1px solid #a6a6a6;box-sizing:border-box;border-radius:1px"></div>
<svg style="position:absolute;left:0;top:0;overflow:visible" width="1" height="1"><path d="M1218.5 287.5 L1223 292.0 L1227.5 287.5" fill="none" stroke="#555" stroke-width="1.1"/></svg>
<div class="t" style="left:1142.0px;top:283.3px;font-size:14.5px;color:#1b1b1b;font-weight:normal;">5%</div>
<div class="t" style="left:1256.0px;top:283.3px;font-size:14.5px;color:#1b1b1b;font-weight:normal;">Brim:</div>
<svg style="position:absolute;left:1292px;top:281px" width="18" height="17" viewBox="0 0 18 17"><rect x="0.5" y="0.5" width="16" height="16" rx="3" fill="#1564c0"/><path d="M4 8.5 L7.3 11.5 L13 5" fill="none" stroke="#fff" stroke-width="1.2"/></svg>
<div style="position:absolute;left:1081px;top:311px;width:498px;height:225px;background:#fff;border:1px solid #a0a0a0;box-sizing:border-box"></div>
<div style="position:absolute;left:1331px;top:313px;width:1px;height:23px;background:#ececec"></div>
<div style="position:absolute;left:1368px;top:313px;width:1px;height:23px;background:#ececec"></div>
<div class="t" style="left:1087.0px;top:318.7px;font-size:14.5px;color:#1b1b1b;font-weight:normal;">Naam</div>
<div class="t" style="left:1442.0px;top:320.2px;font-size:13.94px;color:#1b1b1b;font-weight:normal;">Bewerken</div>
<div style="position:absolute;left:1082px;top:479px;width:495px;height:28px;background:#d9d9d9"></div>
<div class="t" style="left:1105.0px;top:345.4px;font-size:13.7px;color:#1b1b1b;font-weight:normal;">PART 2 LEFT.stl</div>
<svg style="position:absolute;left:1340px;top:345.5px" width="20" height="12" viewBox="0 0 20 12"><path d="M1.5 6 Q10 -2.5 18.5 6 Q10 14.5 1.5 6 Z" fill="none" stroke="#7a7a7a" stroke-width="1.8"/><circle cx="10" cy="6" r="2.6" fill="#7a7a7a"/></svg>
<svg style="position:absolute;left:1463px;top:342.5px" width="18" height="18" viewBox="0 0 18 18"><path d="M8 5 H3 Q2 5 2 6 V16 Q2 17 3 17 H13 Q14 17 14 16 V11" fill="none" stroke="#888" stroke-width="1.4"/><circle cx="13.5" cy="4.5" r="3" fill="#fff" stroke="#e8773a" stroke-width="1.6"/></svg>
<div class="t" style="left:1105.0px;top:373.8px;font-size:13.7px;color:#1b1b1b;font-weight:normal;">PART 2 RIGHT.stl</div>
<svg style="position:absolute;left:1340px;top:373.9px" width="20" height="12" viewBox="0 0 20 12"><path d="M1.5 6 Q10 -2.5 18.5 6 Q10 14.5 1.5 6 Z" fill="none" stroke="#7a7a7a" stroke-width="1.8"/><circle cx="10" cy="6" r="2.6" fill="#7a7a7a"/></svg>
<svg style="position:absolute;left:1463px;top:370.9px" width="18" height="18" viewBox="0 0 18 18"><path d="M8 5 H3 Q2 5 2 6 V16 Q2 17 3 17 H13 Q14 17 14 16 V11" fill="none" stroke="#888" stroke-width="1.4"/><circle cx="13.5" cy="4.5" r="3" fill="#fff" stroke="#e8773a" stroke-width="1.6"/></svg>
<div class="t" style="left:1105.0px;top:402.2px;font-size:13.7px;color:#1b1b1b;font-weight:normal;">PART 3.stl</div>
<svg style="position:absolute;left:1340px;top:402.3px" width="20" height="12" viewBox="0 0 20 12"><path d="M1.5 6 Q10 -2.5 18.5 6 Q10 14.5 1.5 6 Z" fill="none" stroke="#7a7a7a" stroke-width="1.8"/><circle cx="10" cy="6" r="2.6" fill="#7a7a7a"/></svg>
<svg style="position:absolute;left:1463px;top:399.3px" width="18" height="18" viewBox="0 0 18 18"><path d="M8 5 H3 Q2 5 2 6 V16 Q2 17 3 17 H13 Q14 17 14 16 V11" fill="none" stroke="#888" stroke-width="1.4"/><circle cx="13.5" cy="4.5" r="3" fill="#fff" stroke="#e8773a" stroke-width="1.6"/></svg>
<div class="t" style="left:1105.0px;top:430.6px;font-size:13.7px;color:#1b1b1b;font-weight:normal;">PART 3.stl</div>
<svg style="position:absolute;left:1340px;top:430.7px" width="20" height="12" viewBox="0 0 20 12"><path d="M1.5 6 Q10 -2.5 18.5 6 Q10 14.5 1.5 6 Z" fill="none" stroke="#7a7a7a" stroke-width="1.8"/><circle cx="10" cy="6" r="2.6" fill="#7a7a7a"/></svg>
<svg style="position:absolute;left:1463px;top:427.7px" width="18" height="18" viewBox="0 0 18 18"><path d="M8 5 H3 Q2 5 2 6 V16 Q2 17 3 17 H13 Q14 17 14 16 V11" fill="none" stroke="#888" stroke-width="1.4"/><circle cx="13.5" cy="4.5" r="3" fill="#fff" stroke="#e8773a" stroke-width="1.6"/></svg>
<svg style="position:absolute;left:1104px;top:456.1px" width="22" height="19" viewBox="0 0 22 19"><path d="M11 1.5 L20.5 17.5 H1.5 Z" fill="none" stroke="#e8773a" stroke-width="1.6" stroke-linejoin="round"/><path d="M11 6.5 V12" stroke="#e8773a" stroke-width="1.8"/><circle cx="11" cy="14.6" r="1.1" fill="#e8773a"/></svg>
<div class="t" style="left:1128.0px;top:459.0px;font-size:13.7px;color:#1b1b1b;font-weight:normal;">PART 1 .stl</div>
<svg style="position:absolute;left:1340px;top:459.1px" width="20" height="12" viewBox="0 0 20 12"><path d="M1.5 6 Q10 -2.5 18.5 6 Q10 14.5 1.5 6 Z" fill="none" stroke="#7a7a7a" stroke-width="1.8"/><circle cx="10" cy="6" r="2.6" fill="#7a7a7a"/></svg>
<svg style="position:absolute;left:1463px;top:456.1px" width="18" height="18" viewBox="0 0 18 18"><path d="M8 5 H3 Q2 5 2 6 V16 Q2 17 3 17 H13 Q14 17 14 16 V11" fill="none" stroke="#888" stroke-width="1.4"/><circle cx="13.5" cy="4.5" r="3" fill="#fff" stroke="#e8773a" stroke-width="1.6"/></svg>
<svg style="position:absolute;left:1104px;top:484.5px" width="22" height="19" viewBox="0 0 22 19"><path d="M11 1.5 L20.5 17.5 H1.5 Z" fill="none" stroke="#e8773a" stroke-width="1.6" stroke-linejoin="round"/><path d="M11 6.5 V12" stroke="#e8773a" stroke-width="1.8"/><circle cx="11" cy="14.6" r="1.1" fill="#e8773a"/></svg>
<div class="t" style="left:1128.0px;top:487.4px;font-size:13.7px;color:#fafafa;font-weight:normal;">PART 1 .stl</div>
<svg style="position:absolute;left:1340px;top:487.5px" width="20" height="12" viewBox="0 0 20 12"><path d="M1.5 6 Q10 -2.5 18.5 6 Q10 14.5 1.5 6 Z" fill="none" stroke="#7a7a7a" stroke-width="1.8"/><circle cx="10" cy="6" r="2.6" fill="#7a7a7a"/></svg>
<svg style="position:absolute;left:1463px;top:484.5px" width="18" height="18" viewBox="0 0 18 18"><path d="M8 5 H3 Q2 5 2 6 V16 Q2 17 3 17 H13 Q14 17 14 16 V11" fill="none" stroke="#888" stroke-width="1.4"/><circle cx="13.5" cy="4.5" r="3" fill="#fff" stroke="#e8773a" stroke-width="1.6"/></svg>
<div style="position:absolute;left:1082px;top:551px;width:497px;height:197px;border:1px solid #e6e6e6;box-sizing:border-box"></div>
<div style="position:absolute;left:1088px;top:545px;width:130px;height:14px;background:#fff"></div>
<div class="t" style="left:1093.0px;top:545.2px;font-size:14.93px;color:#111;font-weight:bold;">Object bewerken</div>
<div style="position:absolute;left:1091px;top:568px;width:188px;height:27px;background:#fff;border:1px solid #a6a6a6;box-sizing:border-box;border-radius:1px"></div>
<svg style="position:absolute;left:0;top:0;overflow:visible" width="1" height="1"><path d="M1263.5 579.5 L1268 584.0 L1272.5 579.5" fill="none" stroke="#555" stroke-width="1.1"/></svg>
<div class="t" style="left:1106.0px;top:574.4px;font-size:14.87px;color:#1b1b1b;font-weight:normal;">Object coordinates</div>
<div class="t" style="left:1302.0px;top:574.7px;font-size:14.5px;color:#111;font-weight:bold;">X</div>
<svg style="position:absolute;left:1317px;top:572px" width="18" height="18" viewBox="0 0 18 18"><path d="M6 3 H2.5 V15 H6 M12 3 H15.5 V15 H12" fill="none" stroke="#111" stroke-width="2.6"/><path d="M9 1 V17" stroke="#111" stroke-width="1.2" stroke-dasharray="2 2"/></svg>
<div class="t" style="left:1379.5px;top:574.7px;font-size:14.5px;color:#111;font-weight:bold;">Y</div>
<svg style="position:absolute;left:1394.5px;top:572px" width="18" height="18" viewBox="0 0 18 18"><path d="M6 3 H2.5 V15 H6 M12 3 H15.5 V15 H12" fill="none" stroke="#111" stroke-width="2.6"/><path d="M9 1 V17" stroke="#111" stroke-width="1.2" stroke-dasharray="2 2"/></svg>
<div class="t" style="left:1457.0px;top:574.7px;font-size:14.5px;color:#111;font-weight:bold;">Z</div>
<svg style="position:absolute;left:1472px;top:572px" width="18" height="18" viewBox="0 0 18 18"><path d="M6 3 H2.5 V15 H6 M12 3 H15.5 V15 H12" fill="none" stroke="#111" stroke-width="2.6"/><path d="M9 1 V17" stroke="#111" stroke-width="1.2" stroke-dasharray="2 2"/></svg>
<div class="t" style="left:1091.5px;top:604.6px;font-size:14.33px;color:#1b1b1b;font-weight:normal;">Translate (relative) [World]:</div>
<div class="t" style="left:1091.5px;top:634.8px;font-size:14.4px;color:#1b1b1b;font-weight:normal;">Rotate (relative):</div>
<div class="t" style="left:1114.6px;top:664.7px;font-size:14.54px;color:#1b1b1b;font-weight:normal;">Verschalingsfactoren:</div>
<div class="t" style="left:1114.6px;top:694.7px;font-size:14.5px;color:#1b1b1b;font-weight:normal;">Size [World]:</div>
<svg style="position:absolute;left:1092px;top:678px" width="16" height="18" viewBox="0 0 16 18"><path d="M3.5 8 V5.5 a4.5 4.5 0 0 1 9 0 V8" fill="none" stroke="#7b7b7b" stroke-width="2.6"/><rect x="1" y="7.5" width="14" height="10" rx="1.5" fill="#7b7b7b"/><polygon points="6.5,10.5 10.5,12.8 6.5,15" fill="#fff"/></svg>
<div style="position:absolute;left:1281px;top:598px;width:75px;height:27px;background:#fff;border:1px solid #9a9a9a;box-sizing:border-box"></div>
<div class="t" style="left:1287.0px;top:604.2px;font-size:14.5px;color:#1b1b1b;font-weight:normal;">0</div>
<div style="position:absolute;left:1358px;top:598px;width:75px;height:27px;background:#fff;border:1px solid #9a9a9a;box-sizing:border-box"></div>
<div class="t" style="left:1364.0px;top:604.2px;font-size:14.5px;color:#1b1b1b;font-weight:normal;">0</div>
<div style="position:absolute;left:1436px;top:598px;width:75px;height:27px;background:#fff;border:1px solid #9a9a9a;box-sizing:border-box"></div>
<div class="t" style="left:1442.0px;top:604.2px;font-size:14.5px;color:#1b1b1b;font-weight:normal;">0</div>
<div class="t" style="left:1514.0px;top:605.2px;font-size:14.5px;color:#1b1b1b;font-weight:normal;">mm</div>
<div style="position:absolute;left:1281px;top:628px;width:75px;height:27px;background:#fff;border:1px solid #9a9a9a;box-sizing:border-box"></div>
<div class="t" style="left:1287.0px;top:634.2px;font-size:14.5px;color:#1b1b1b;font-weight:normal;">0</div>
<div style="position:absolute;left:1358px;top:628px;width:75px;height:27px;background:#fff;border:1px solid #9a9a9a;box-sizing:border-box"></div>
<div class="t" style="left:1364.0px;top:634.2px;font-size:14.5px;color:#1b1b1b;font-weight:normal;">0</div>
<div style="position:absolute;left:1436px;top:628px;width:75px;height:27px;background:#fff;border:1px solid #9a9a9a;box-sizing:border-box"></div>
<div class="t" style="left:1442.0px;top:634.2px;font-size:14.5px;color:#1b1b1b;font-weight:normal;">0</div>
<div class="t" style="left:1514.0px;top:631.0px;font-size:13px;color:#222;font-weight:normal;">°</div>
<div style="position:absolute;left:1281px;top:658px;width:75px;height:27px;background:#fff;border:1px solid #9a9a9a;box-sizing:border-box"></div>
<div class="t" style="left:1287.0px;top:664.2px;font-size:14.5px;color:#1b1b1b;font-weight:normal;">100</div>
<div style="position:absolute;left:1358px;top:658px;width:75px;height:27px;background:#fff;border:1px solid #9a9a9a;box-sizing:border-box"></div>
<div class="t" style="left:1364.0px;top:664.2px;font-size:14.5px;color:#1b1b1b;font-weight:normal;">100</div>
<div style="position:absolute;left:1436px;top:658px;width:75px;height:27px;background:#fff;border:1px solid #9a9a9a;box-sizing:border-box"></div>
<div class="t" style="left:1442.0px;top:664.2px;font-size:14.5px;color:#1b1b1b;font-weight:normal;">100</div>
<div class="t" style="left:1514.0px;top:665.2px;font-size:14.5px;color:#1b1b1b;font-weight:normal;">%</div>
<div style="position:absolute;left:1281px;top:688px;width:75px;height:27px;background:#fff;border:1px solid #9a9a9a;box-sizing:border-box"></div>
<div class="t" style="left:1287.0px;top:694.2px;font-size:14.5px;color:#1b1b1b;font-weight:normal;">35</div>
<div style="position:absolute;left:1358px;top:688px;width:75px;height:27px;background:#fff;border:1px solid #9a9a9a;box-sizing:border-box"></div>
<div class="t" style="left:1364.0px;top:694.2px;font-size:14.5px;color:#1b1b1b;font-weight:normal;">140</div>
<div style="position:absolute;left:1436px;top:688px;width:75px;height:27px;background:#fff;border:1px solid #9a9a9a;box-sizing:border-box"></div>
<div class="t" style="left:1442.0px;top:694.2px;font-size:14.5px;color:#1b1b1b;font-weight:normal;">17,5</div>
<div class="t" style="left:1514.0px;top:695.2px;font-size:14.5px;color:#1b1b1b;font-weight:normal;">mm</div>
<div style="position:absolute;left:1091px;top:719.5px;width:16px;height:16px;background:#fff;border:1px solid #8a8a8a;box-sizing:border-box;border-radius:3px"></div>
<div class="t" style="left:1112.0px;top:721.7px;font-size:14.5px;color:#1b1b1b;font-weight:normal;">Inches</div>
<div style="position:absolute;left:1082px;top:764px;width:497px;height:60px;border:1px solid #e6e6e6;box-sizing:border-box"></div>
<div style="position:absolute;left:1086px;top:757px;width:40px;height:14px;background:#fff"></div>
<div class="t" style="left:1089.0px;top:758.6px;font-size:15.2px;color:#111;font-weight:bold;">Info</div>
<div style="position:absolute;left:1082px;top:772px;width:496px;height:22px;overflow:hidden">
<div class="t" style="left:5.0px;top:10.2px;font-size:14.5px;color:#1b1b1b;font-weight:normal;">Grootte:&nbsp;&nbsp;&nbsp;35.00 x 140.00 x 17.50&nbsp;&nbsp;&nbsp;Volume:&nbsp;&nbsp;&nbsp;62147.73</div>
</div>
<div style="position:absolute;left:1081px;top:800px;width:519px;height:39px;background:#e6e6e6"></div>
<div class="t" style="left:1248.0px;top:812.4px;font-size:14.92px;color:#e8692a;font-weight:bold;">Exporteer .gcode-bestand</div>
</body></html>
